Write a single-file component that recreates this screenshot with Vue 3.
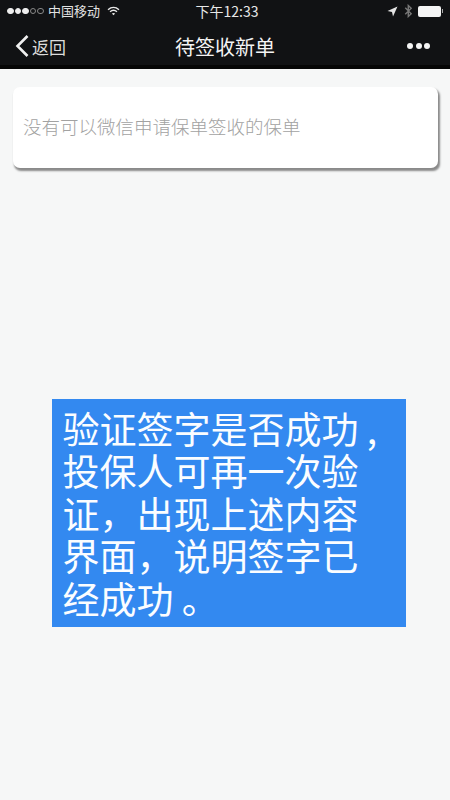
<script setup>
const noteText = '验证签字是否成功 ,\n投保人可再一次验\n证，出现上述内容\n界面，说明签字已\n经成功 。'
</script>

<template>
  <div class="page">
    <header class="top">
      <div class="status">
        <div class="status-left">
          <span class="dots">
            <i class="dot on"></i><i class="dot on"></i><i class="dot on"></i><i class="dot"></i><i class="dot"></i>
          </span>
          <span class="carrier">中国移动</span>
          <svg class="wifi" width="13" height="10" viewBox="0 0 14 11">
            <path d="M1 4.2C4.6 .9 9.4 .9 13 4.2" fill="none" stroke="#e8e8e8" stroke-width="1.6"/>
            <path d="M3.2 6.3C5.4 4.4 8.6 4.4 10.8 6.3" fill="none" stroke="#e8e8e8" stroke-width="1.6"/>
            <path d="M5.2 8.3L7 10.2L8.8 8.3C7.8 7.4 6.2 7.4 5.2 8.3Z" fill="#e8e8e8"/>
          </svg>
        </div>
        <span class="clock">下午12:33</span>
        <div class="status-right">
          <svg width="11" height="11" viewBox="0 0 11 11"><path d="M10.5 .5L.5 5L5 6L6 10.5Z" fill="#e4e4e4"/></svg>
          <svg class="bt" width="9" height="14" viewBox="0 0 8 13"><path d="M1 3.5L6.5 9L3.8 11.6V1.4L6.5 4L1 9.5" fill="none" stroke="#777" stroke-width="1.3"/></svg>
          <span class="battery"></span><span class="cap"></span>
        </div>
      </div>
      <div class="nav">
        <div class="back">
          <svg width="15" height="24" viewBox="0 0 15 24"><path d="M12.5 2L2.5 12L12.5 22" fill="none" stroke="#f0f0f0" stroke-width="2.6"/></svg>
          <span>返回</span>
        </div>
        <h1 class="title">待签收新单</h1>
        <div class="more"><i></i><i></i><i></i></div>
      </div>
    </header>
    <main class="body">
      <section class="card">没有可以微信申请保单签收的保单</section>
      <section class="note">{{ noteText }}</section>
    </main>
  </div>
</template>

<style>
html, body { margin: 0; background: #f6f7f7; }
</style>

<style scoped>
.page {
  width: 450px;
  height: 800px;
  overflow: hidden;
  background: #f6f7f7;
  font-family: "Noto Sans CJK SC", "Liberation Sans", sans-serif;
}
.top {
  height: 69px;
  box-sizing: border-box;
  background: #111214;
  border-bottom: 4px solid #060606;
  color: #f2f2f2;
}
.status {
  height: 22px;
  padding: 0 7px;
  display: grid;
  grid-template-columns: 1fr auto 1fr;
  align-items: center;
}
.status-left { display: flex; align-items: center; }
.dots { display: flex; gap: 1px; }
.dot {
  width: 6.6px;
  height: 6.6px;
  box-sizing: border-box;
  border-radius: 50%;
  border: 1px solid #888;
}
.dot.on { background: #eee; border-color: #eee; }
.carrier { margin-left: 4px; color: #e2e2e2; font-size: 13px; line-height: 18px; }
.wifi { margin-left: 7px; }
.clock { margin-left: 4px; font-size: 14px; line-height: 18px; color: #e8e8e8; }
.status-right { display: flex; align-items: center; justify-content: flex-end; gap: 6px; }
.bt { margin-right: -1px; }
.battery {
  width: 23px;
  height: 11px;
  background: #f4f4f4;
  border-radius: 2px;
}
.cap {
  width: 1.5px;
  height: 4px;
  margin-left: -5px;
  background: #aaa;
}
.nav {
  height: 42px;
  box-sizing: border-box;
  padding: 6px 20px 0 15px;
  display: grid;
  grid-template-columns: 1fr auto 1fr;
  align-items: center;
}
.back {
  display: flex;
  align-items: center;
  gap: 2px;
  font-size: 17px;
  color: #dcdcdc;
}
.title {
  margin: 0 0 0 5px;
  font-size: 20px;
  font-weight: 400;
  color: #f4f4f4;
}
.more { display: flex; gap: 2.5px; justify-content: flex-end; }
.more i {
  width: 6px;
  height: 6px;
  border-radius: 50%;
  background: #f4f4f4;
}
.body { padding: 18px 12px 0 13px; }
.card {
  height: 81px;
  width: 425px;
  box-sizing: border-box;
  padding: 0 10px 4px;
  display: flex;
  align-items: center;
  background: #fff;
  border-radius: 7px;
  box-shadow: 1.5px 2.5px 2px #8a8a8a;
  font-size: 18.5px;
  font-weight: 300;
  color: #a2a2a2;
}
.note {
  margin: 231px 0 0 39px;
  width: 354px;
  height: 228px;
  box-sizing: border-box;
  padding: 8px 0 0 10.5px;
  background: #3389f0;
  color: #fbfdff;
  font-size: 37px;
  line-height: 42.4px;
  white-space: pre;
}
</style>
